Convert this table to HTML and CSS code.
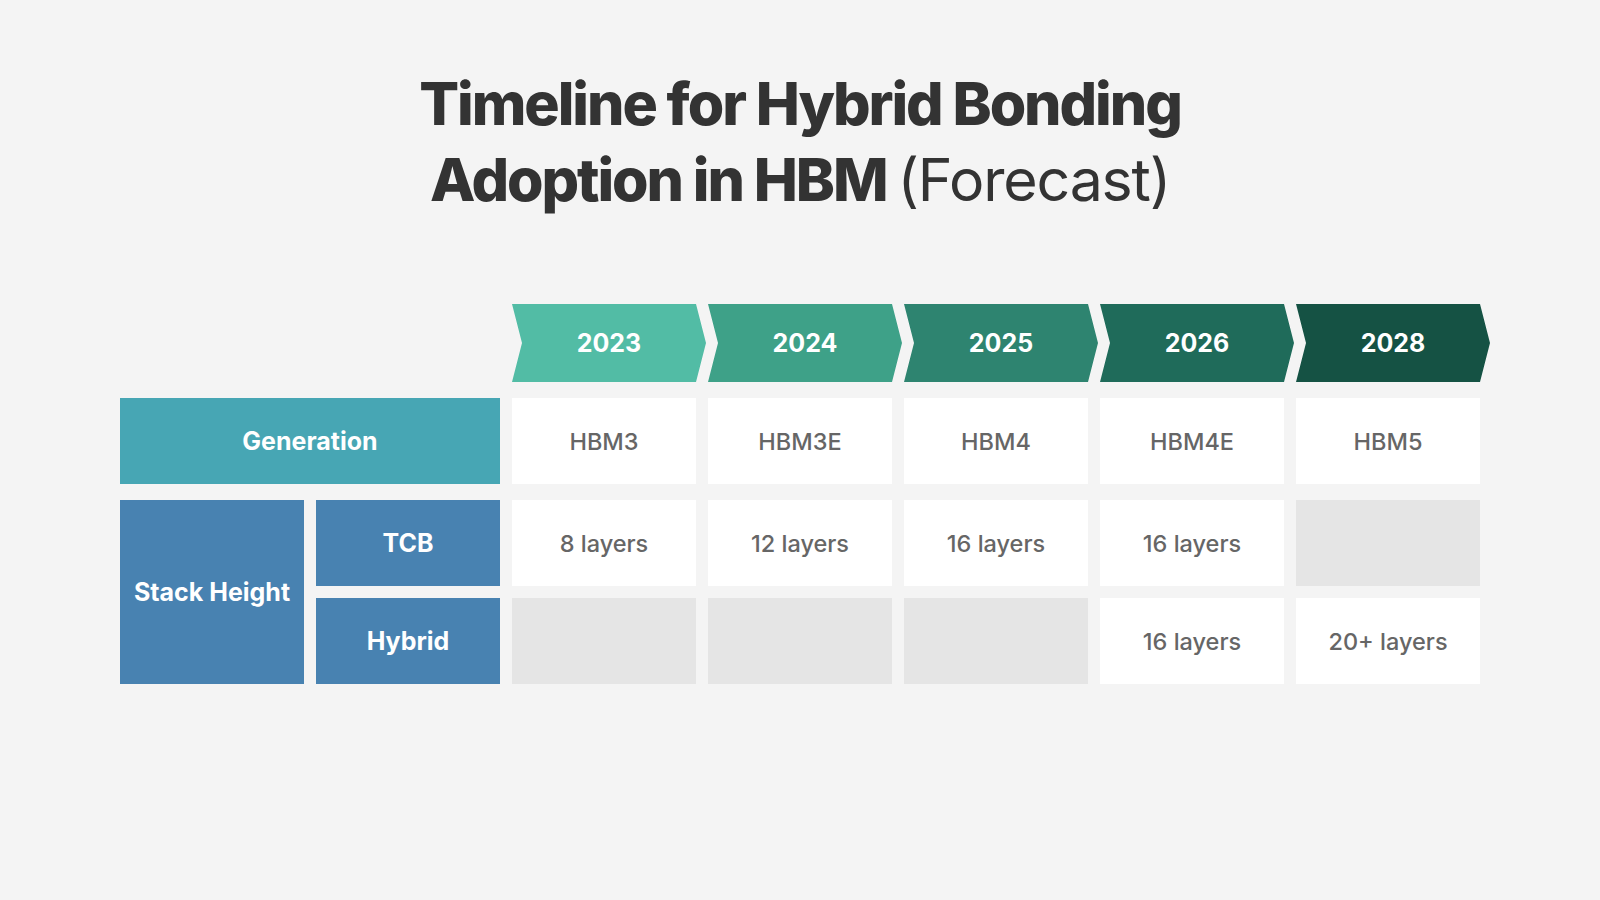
FILE: index.html
```html
<!DOCTYPE html>
<html lang="en">
<head>
<meta charset="utf-8">
<title>Timeline for Hybrid Bonding Adoption in HBM (Forecast)</title>
<link rel="stylesheet" href="styles.css">
</head>
<body>
<main class="page">
  <h1 class="title">
    <span class="title-line">Timeline for Hybrid Bonding</span>
    <span class="title-line">Adoption in HBM <span class="title-light">(Forecast)</span></span>
  </h1>

  <section class="timeline">
    <div class="arrow arrow-1">2023</div>
    <div class="arrow arrow-2">2024</div>
    <div class="arrow arrow-3">2025</div>
    <div class="arrow arrow-4">2026</div>
    <div class="arrow arrow-5">2028</div>

    <div class="label label-generation gen">Generation</div>
    <div class="cell gen">HBM3</div>
    <div class="cell gen">HBM3E</div>
    <div class="cell gen">HBM4</div>
    <div class="cell gen">HBM4E</div>
    <div class="cell gen">HBM5</div>

    <div class="label label-stack">Stack Height</div>
    <div class="label label-sub">TCB</div>
    <div class="cell">8 layers</div>
    <div class="cell">12 layers</div>
    <div class="cell">16 layers</div>
    <div class="cell">16 layers</div>
    <div class="cell cell-empty"></div>

    <div class="label label-sub">Hybrid</div>
    <div class="cell cell-empty"></div>
    <div class="cell cell-empty"></div>
    <div class="cell cell-empty"></div>
    <div class="cell">16 layers</div>
    <div class="cell">20+ layers</div>
  </section>
</main>
</body>
</html>
```

FILE: styles.css
```css
html, body {
  margin: 0;
  padding: 0;
}

body {
  background: #f4f4f4;
  font-family: "Inter", "Noto Sans", "Liberation Sans", sans-serif;
  color: #333333;
  width: 1600px;
  height: 900px;
  overflow: hidden;
}

.page {
  padding-top: 66px;
  display: flex;
  flex-direction: column;
  align-items: center;
}

.title {
  margin: 0 0 86px;
  font-size: 59px;
  line-height: 76px;
  font-weight: 800;
  letter-spacing: -0.035em;
  text-align: center;
  color: #333333;
}

.title-line {
  display: block;
}

.title-light {
  font-weight: 400;
  letter-spacing: -0.02em;
}

.timeline {
  display: grid;
  grid-template-columns: repeat(7, 184px);
  grid-template-rows: 82px 90px 86px 86px;
  column-gap: 12px;
  row-gap: 12px;
}

.arrow {
  height: 78px;
  width: 194px;
  align-self: start;
  display: flex;
  align-items: center;
  justify-content: center;
  color: #ffffff;
  font-size: 25px;
  font-weight: 700;
  clip-path: polygon(0 0, 184px 0, 194px 50%, 184px 100%, 0 100%, 10px 50%);
}

.arrow-1 { grid-column: 3; background: #52bca5; }
.arrow-2 { grid-column: 4; background: #3ea188; }
.arrow-3 { grid-column: 5; background: #2e8470; }
.arrow-4 { grid-column: 6; background: #1f6b5a; }
.arrow-5 { grid-column: 7; background: #155244; }

.gen {
  height: 86px;
  align-self: start;
}

.label {
  display: flex;
  align-items: center;
  justify-content: center;
  color: #ffffff;
  font-size: 25px;
  font-weight: 700;
}

.label-generation {
  grid-column: 1 / span 2;
  background: #47a6b4;
}

.label-stack {
  grid-column: 1;
  grid-row: 3 / span 2;
  background: #4882b1;
}

.label-sub {
  grid-column: 2;
  background: #4882b1;
}

.cell {
  display: flex;
  align-items: center;
  justify-content: center;
  background: #ffffff;
  color: #666666;
  font-size: 23.5px;
  font-weight: 500;
}

.cell-empty {
  background: #e5e5e5;
}
```
